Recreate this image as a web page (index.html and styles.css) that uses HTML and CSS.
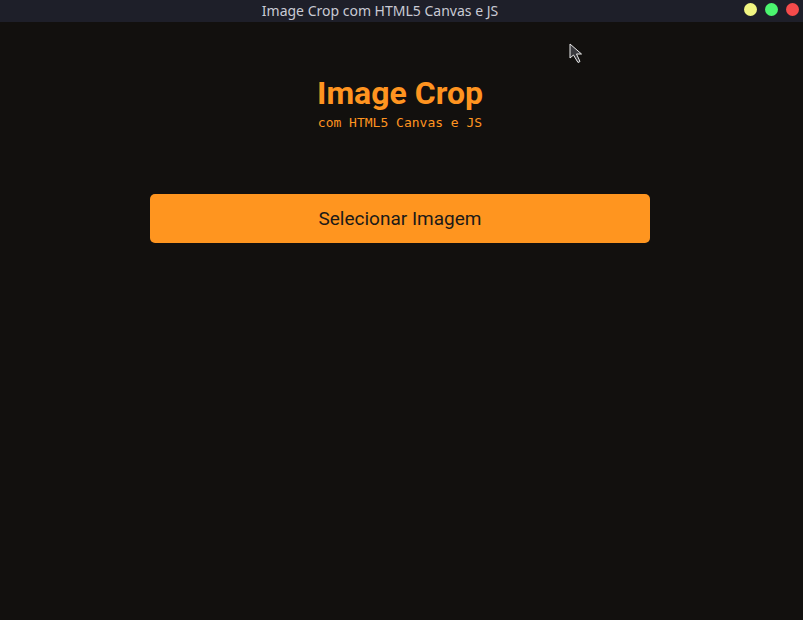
FILE: index.html
```html
<!DOCTYPE html>
<html>
<head>
<meta charset="utf-8">
<link rel="stylesheet" href="styles.css">
</head>
<body>
<div class="titlebar">
  <span class="title">Image Crop com HTML5 Canvas e JS</span>
  <div class="controls">
    <span class="dot yellow"></span>
    <span class="dot green"></span>
    <span class="dot red"></span>
  </div>
</div>
<main class="content">
  <header class="head">
    <h1 class="heading">Image Crop</h1>
    <p class="sub">com HTML5 Canvas e JS</p>
  </header>
  <button class="select">Selecionar Imagem</button>
</main>
<svg class="cursor" width="14" height="22" viewBox="0 0 14 22"><path d="M1 1 L1 15 L4.5 12 L9 19.5 L11 18.5 L7.5 11 L12.5 11 Z" fill="#3a3a3e" stroke="#e8e8e8" stroke-width="1"/></svg>
</body>
</html>
```
FILE: styles.css
```css
html, body {
  margin: 0;
  padding: 0;
  height: 100%;
  background: #12100e;
}
body {
  position: relative;
  overflow: hidden;
}
.titlebar {
  height: 22px;
  background: #1e1f29;
  display: flex;
  align-items: center;
  justify-content: center;
  padding-right: 43px;
  position: relative;
}
.title {
  font-family: "Noto Sans", sans-serif;
  font-size: 14px;
  color: #c9cad4;
  line-height: 22px;
}
.controls {
  position: absolute;
  right: 4px;
  top: 3px;
  display: flex;
  gap: 8px;
}
.dot {
  width: 13px;
  height: 13px;
  border-radius: 50%;
  display: block;
}
.yellow { background: #f1f582; }
.green { background: #4bf56f; }
.red { background: #f54b4b; }
.content {
  display: flex;
  flex-direction: column;
  align-items: center;
  padding-right: 3px;
}
.head {
  margin-top: 52px;
  text-align: center;
}
.heading {
  margin: 0;
  font-family: Roboto, sans-serif;
  font-weight: 700;
  font-size: 32px;
  line-height: 38px;
  color: #ff9420;
}
.sub {
  margin: 3px 0 0;
  font-family: "DejaVu Sans Mono", monospace;
  font-size: 13px;
  line-height: 15px;
  color: #ff9420;
}
.select {
  margin-top: 64px;
  width: 500px;
  height: 49px;
  border: none;
  border-radius: 5px;
  background: #ff951f;
  color: #1c1a18;
  font-family: Roboto, sans-serif;
  font-size: 19px;
  cursor: pointer;
}
.cursor {
  position: absolute;
  left: 569px;
  top: 43px;
}
```
